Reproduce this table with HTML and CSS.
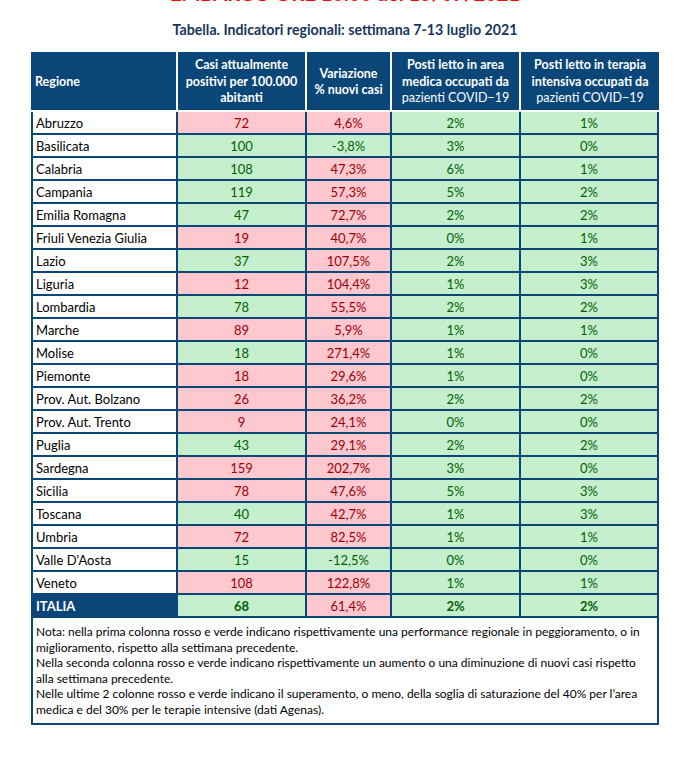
FILE: index.html
```html
<!DOCTYPE html>
<html lang="it">
<head>
<meta charset="utf-8">
<link rel="stylesheet" href="styles.css">
</head>
<body>
<div class="page">
  <div class="embargo">EMBARGO ORE 10.00 del 15/07/2021</div>
  <div class="title">Tabella. Indicatori regionali: settimana 7-13 luglio 2021</div>
  <div class="head">
    <div class="hc hc-left"><div>Regione</div></div>
    <div class="hc"><div>Casi attualmente<br>positivi per 100.000<br>abitanti</div></div>
    <div class="hc"><div>Variazione<br>% nuovi casi</div></div>
    <div class="hc"><div>Posti letto in area<br>medica occupati da<br><span class="reg">pazienti COVID−19</span></div></div>
    <div class="hc"><div>Posti letto in terapia<br>intensiva occupati da<br><span class="reg">pazienti COVID−19</span></div></div>
  </div>
  <div class="grid">
    <div class="name">Abruzzo</div><div class="r">72</div><div class="r">4,6%</div><div class="g">2%</div><div class="g">1%</div>
    <div class="name">Basilicata</div><div class="g">100</div><div class="g">-3,8%</div><div class="g">3%</div><div class="g">0%</div>
    <div class="name">Calabria</div><div class="g">108</div><div class="r">47,3%</div><div class="g">6%</div><div class="g">1%</div>
    <div class="name">Campania</div><div class="g">119</div><div class="r">57,3%</div><div class="g">5%</div><div class="g">2%</div>
    <div class="name">Emilia Romagna</div><div class="g">47</div><div class="r">72,7%</div><div class="g">2%</div><div class="g">2%</div>
    <div class="name">Friuli Venezia Giulia</div><div class="r">19</div><div class="r">40,7%</div><div class="g">0%</div><div class="g">1%</div>
    <div class="name">Lazio</div><div class="g">37</div><div class="r">107,5%</div><div class="g">2%</div><div class="g">3%</div>
    <div class="name">Liguria</div><div class="r">12</div><div class="r">104,4%</div><div class="g">1%</div><div class="g">3%</div>
    <div class="name">Lombardia</div><div class="g">78</div><div class="r">55,5%</div><div class="g">2%</div><div class="g">2%</div>
    <div class="name">Marche</div><div class="r">89</div><div class="r">5,9%</div><div class="g">1%</div><div class="g">1%</div>
    <div class="name">Molise</div><div class="g">18</div><div class="r">271,4%</div><div class="g">1%</div><div class="g">0%</div>
    <div class="name">Piemonte</div><div class="r">18</div><div class="r">29,6%</div><div class="g">1%</div><div class="g">0%</div>
    <div class="name">Prov. Aut. Bolzano</div><div class="r">26</div><div class="r">36,2%</div><div class="g">2%</div><div class="g">2%</div>
    <div class="name">Prov. Aut. Trento</div><div class="r">9</div><div class="r">24,1%</div><div class="g">0%</div><div class="g">0%</div>
    <div class="name">Puglia</div><div class="g">43</div><div class="r">29,1%</div><div class="g">2%</div><div class="g">2%</div>
    <div class="name">Sardegna</div><div class="r">159</div><div class="r">202,7%</div><div class="g">3%</div><div class="g">0%</div>
    <div class="name">Sicilia</div><div class="r">78</div><div class="r">47,6%</div><div class="g">5%</div><div class="g">3%</div>
    <div class="name">Toscana</div><div class="g">40</div><div class="r">42,7%</div><div class="g">1%</div><div class="g">3%</div>
    <div class="name">Umbria</div><div class="r">72</div><div class="r">82,5%</div><div class="g">1%</div><div class="g">1%</div>
    <div class="name">Valle D'Aosta</div><div class="g">15</div><div class="g">-12,5%</div><div class="g">0%</div><div class="g">0%</div>
    <div class="name">Veneto</div><div class="r">108</div><div class="r">122,8%</div><div class="g">1%</div><div class="g">1%</div>
    <div class="name total">ITALIA</div><div class="g b">68</div><div class="r">61,4%</div><div class="g b">2%</div><div class="g b">2%</div>
  </div>
  <div class="note">
    <p>Nota: nella prima colonna rosso e verde indicano rispettivamente una performance regionale in peggioramento, o in miglioramento, rispetto alla settimana precedente.</p>
    <p>Nella seconda colonna rosso e verde indicano rispettivamente un aumento o una diminuzione di nuovi casi rispetto alla settimana precedente.</p>
    <p>Nelle ultime 2 colonne rosso e verde indicano il superamento, o meno, della soglia di saturazione del 40% per l’area medica e del 30% per le terapie intensive (dati Agenas).</p>
  </div>
</div>
</body>
</html>
```

FILE: styles.css
```css
html, body {
  margin: 0;
  padding: 0;
  background: #ffffff;
}
body {
  font-family: Lato, "Liberation Sans", sans-serif;
  overflow: hidden;
}
.page {
  width: 628px;
  margin-left: 31px;
}
.embargo {
  font-size: 20px;
  font-weight: 700;
  color: #ff0000;
  text-align: center;
  line-height: 20px;
  margin-top: -17px;
  white-space: nowrap;
}
.title {
  margin-top: 18px;
  margin-bottom: 13px;
  font-size: 14.2px;
  font-weight: 700;
  line-height: 18px;
  color: #17365d;
  text-align: center;
  white-space: nowrap;
}
.head {
  display: grid;
  grid-template-columns: 145px 127px 83px 127px 138px;
  column-gap: 2px;
  height: 58px;
  margin-bottom: 2px;
}
.hc {
  background: #0b4679;
  color: #ffffff;
  font-size: 12.5px;
  font-weight: 700;
  line-height: 16.5px;
  text-align: center;
  display: flex;
  align-items: center;
  justify-content: center;
  white-space: nowrap;
  padding-top: 2px;
}
.hc-left {
  justify-content: flex-start;
  padding-left: 4px;
}
.reg {
  font-weight: 400;
}
.grid {
  display: grid;
  grid-template-columns: 143px 127px 83px 127px 136px;
  grid-auto-rows: 21px;
  gap: 2px;
  padding: 0 2px 2px;
  background: #0b4679;
}
.grid > div {
  font-size: 13px;
  line-height: 19px;
  padding-top: 2px;
  text-align: center;
  white-space: nowrap;
}
.grid > .name {
  background: #ffffff;
  color: #000000;
  text-align: left;
  padding-left: 3px;
}
.grid > .total {
  background: #0b4679;
  color: #ffffff;
  font-weight: 700;
}
.r {
  background: #ffc7ce;
  color: #9c0006;
}
.g {
  background: #c6efce;
  color: #006100;
}
.b {
  font-weight: 700;
}
.note {
  border: 2px solid #0b4679;
  border-top: 0;
  padding: 6px 4px 5px 3px;
  font-size: 12px;
  line-height: 15.6px;
  color: #000000;
}
.note p {
  margin: 0;
}
```
